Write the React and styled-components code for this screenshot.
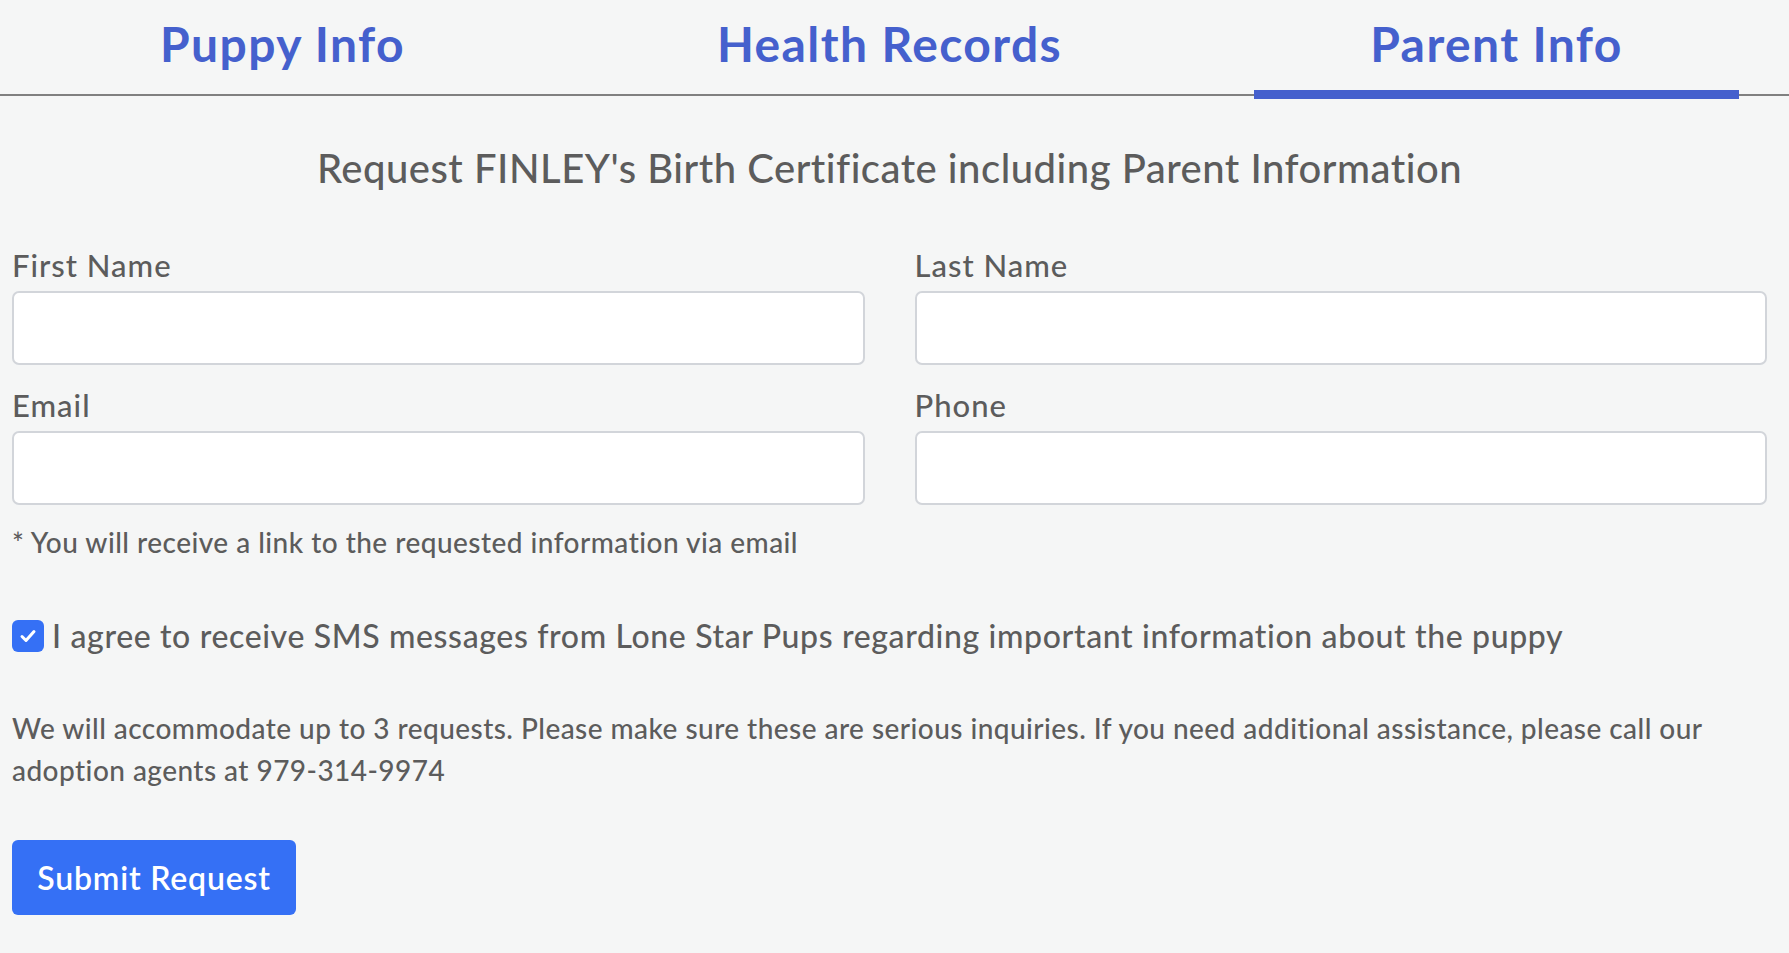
import React from "react";
import styled, { createGlobalStyle } from "styled-components";

const Global = createGlobalStyle`
  html, body { margin: 0; padding: 0; background: #f5f6f6; overflow-x: hidden; }
  body { font-family: "Lato", "Noto Sans", sans-serif; color: #5e5e5e; }
  * { box-sizing: border-box; }
`;

const Page = styled.div`
  min-height: 953px;
  background: #f5f6f6;
`;

const Header = styled.div`
  border-bottom: 2px solid #808080;
`;

const TabRow = styled.div`
  display: grid;
  grid-template-columns: repeat(3, 607px);
  margin-left: -21px;
  height: 94px;
`;

const Tab = styled.div`
  position: relative;
  display: flex;
  align-items: center;
  justify-content: center;
  padding-bottom: 8px;
  font-size: 48px;
  font-weight: 700;
  color: #4560cd;
  letter-spacing: 1.4px;
  &::after {
    content: "";
    display: ${(p) => (p.$active ? "block" : "none")};
    position: absolute;
    left: 10%;
    right: 10%;
    bottom: -5px;
    height: 9px;
    background: #4560cd;
  }
`;

const Content = styled.div`
  padding: 0 22px 0 12px;
`;

const Title = styled.h2`
  margin: 47px 0 0;
  text-align: center;
  font-size: 40px;
  line-height: 50px;
  font-weight: 500;
  letter-spacing: 0.5px;
  color: #5c5c5c;
`;

const FormGrid = styled.div`
  display: grid;
  grid-template-columns: 1fr 1fr;
  column-gap: 50px;
  row-gap: 22px;
  margin-top: 54px;
`;

const Field = styled.div`
  display: flex;
  flex-direction: column;
`;

const Label = styled.label`
  font-size: 31px;
  line-height: 36px;
  font-weight: 500;
  letter-spacing: 1px;
  color: #5c5c5c;
  margin-bottom: 8px;
`;

const Input = styled.input`
  height: 74px;
  width: 100%;
  background: #ffffff;
  border: 2px solid #d2d5da;
  border-radius: 7px;
  font-family: inherit;
  font-size: 26px;
  padding: 0 16px;
  outline: none;
`;

const Note = styled.p`
  margin: 20px 0 0;
  font-size: 28px;
  line-height: 34px;
  font-weight: 500;
  letter-spacing: 0.47px;
  color: #5c5c5c;
`;

const CheckRow = styled.label`
  display: flex;
  align-items: center;
  gap: 8px;
  margin-top: 61px;
  font-size: 32px;
  font-weight: 500;
  letter-spacing: 0.63px;
  color: #5c5c5c;
  line-height: 32px;
`;

const CheckBox = styled.span`
  width: 32px;
  height: 32px;
  flex: none;
  border-radius: 6px;
  background: #3570f5;
  display: flex;
  align-items: center;
  justify-content: center;
`;

const Para = styled.p`
  margin: 55px 0 0;
  font-size: 28px;
  line-height: 42px;
  font-weight: 500;
  letter-spacing: 0.45px;
  color: #5c5c5c;
`;

const Button = styled.button`
  margin-top: 49px;
  width: 284px;
  height: 75px;
  border: none;
  border-radius: 6px;
  background: #3570f5;
  color: #ffffff;
  font-family: inherit;
  font-size: 32px;
  font-weight: 600;
  letter-spacing: 0.8px;
  cursor: pointer;
`;

export default function App() {
  return (
    <Page>
      <Global />
      <Header>
        <TabRow>
          <Tab>Puppy Info</Tab>
          <Tab>Health Records</Tab>
          <Tab $active>Parent Info</Tab>
        </TabRow>
      </Header>
      <Content>
        <Title>Request FINLEY's Birth Certificate including Parent Information</Title>
        <FormGrid>
          <Field>
            <Label>First Name</Label>
            <Input type="text" />
          </Field>
          <Field>
            <Label>Last Name</Label>
            <Input type="text" />
          </Field>
          <Field>
            <Label>Email</Label>
            <Input type="email" />
          </Field>
          <Field>
            <Label>Phone</Label>
            <Input type="tel" />
          </Field>
        </FormGrid>
        <Note>* You will receive a link to the requested information via email</Note>
        <CheckRow>
          <CheckBox>
            <svg width="20" height="20" viewBox="0 0 20 20" fill="none">
              <path d="M4 10.5 L8 14.5 L16 5.5" stroke="#ffffff" strokeWidth="3" strokeLinecap="round" strokeLinejoin="round" />
            </svg>
          </CheckBox>
          I agree to receive SMS messages from Lone Star Pups regarding important information about the puppy
        </CheckRow>
        <Para>
          We will accommodate up to 3 requests. Please make sure these are serious inquiries. If you need additional assistance, please call our adoption agents at 979-314-9974
        </Para>
        <Button>Submit Request</Button>
      </Content>
    </Page>
  );
}
